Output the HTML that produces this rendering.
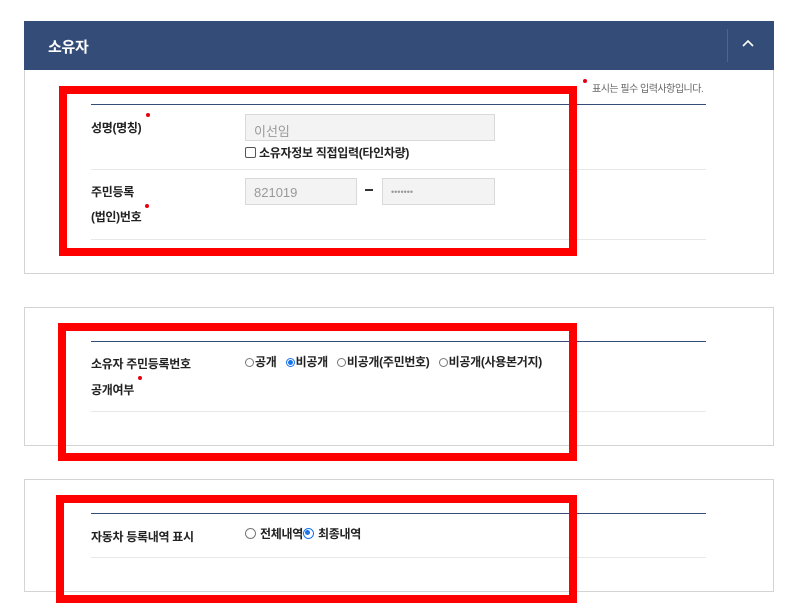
<!DOCTYPE html>
<html><head><meta charset="utf-8"><style>
*{margin:0;padding:0;box-sizing:border-box}
body{width:803px;height:613px;background:#fff;position:relative;overflow:hidden;font-family:"Liberation Sans","Noto Sans CJK KR",sans-serif;color:#222}
.a{position:absolute}
.hd{left:24px;top:21px;width:750px;height:49px;background:#344d78}
.t{font-weight:bold;font-size:12px;white-space:nowrap;letter-spacing:-0.3px}
.pn{border:1px solid #d4d4d4}
.dk{height:1px;background:#344d78;left:91px;width:615px}
.lt{height:1px;background:#e8e8e8;left:91px;width:615px}
.dot{width:4px;height:4px;border-radius:50%;background:#e60012}
.in{background:#f3f3f3;border:1px solid #d9d9d9;height:27px;font-size:13px;color:#999;padding:6px 0 0 8px}
.rb{border:8px solid #ff0000}
.r{display:inline-block;width:9px;height:9px;border:1px solid #777;border-radius:50%;vertical-align:-1px;margin-right:1px;position:relative}
.r.on{border-color:#1a73e8}
.r.on:after{content:"";position:absolute;left:1px;top:1px;width:5px;height:5px;border-radius:50%;background:#1a73e8}
</style></head><body>
<div class="a hd"></div>
<div class="a t" style="left:48px;top:36px;font-size:15px;color:#fff">소유자</div>
<div class="a" style="left:727px;top:29px;width:1px;height:33px;background:#4d6590"></div>
<svg class="a" style="left:741px;top:38px" width="14" height="10"><path d="M2 8 L7 3 L12 8" stroke="#fff" stroke-width="1.6" fill="none"/></svg>

<div class="a pn" style="left:24px;top:70px;width:750px;height:204px;border-top:none"></div>
<div class="a dot" style="left:583px;top:79px"></div>
<div class="a" style="left:592px;top:80px;font-size:10px;color:#666;letter-spacing:-0.5px">표시는 필수 입력사항입니다.</div>
<div class="a dk" style="top:104px"></div>
<div class="a t" style="left:91px;top:119px">성명(명칭)</div>
<div class="a dot" style="left:146px;top:113px"></div>
<div class="a in" style="left:245px;top:114px;width:250px">이선임</div>
<div class="a t" style="left:245px;top:144px"><span style="display:inline-block;width:11px;height:11px;border:1px solid #555;border-radius:2px;vertical-align:-1px"></span> 소유자정보 직접입력(타인차량)</div>
<div class="a lt" style="top:169px"></div>
<div class="a t" style="left:91px;top:183px">주민등록</div>
<div class="a t" style="left:91px;top:208px">(법인)번호</div>
<div class="a dot" style="left:145px;top:204px"></div>
<div class="a in" style="left:245px;top:178px;width:112px">821019</div>
<div class="a" style="left:365px;top:189px;width:8px;height:2px;background:#333"></div>
<div class="a in" style="left:382px;top:178px;width:113px;font-size:9px;padding-top:8px">•••••••</div>
<div class="a lt" style="top:239px"></div>
<div class="a rb" style="left:59px;top:86px;width:518px;height:170px"></div>

<div class="a pn" style="left:24px;top:307px;width:750px;height:139px"></div>
<div class="a dk" style="top:341px"></div>
<div class="a t" style="left:91px;top:355px">소유자 주민등록번호</div>
<div class="a t" style="left:91px;top:381px">공개여부</div>
<div class="a dot" style="left:138px;top:376px"></div>
<div class="a t" style="left:245px;top:353px"><span class="r"></span>공개 &nbsp;&nbsp;<span class="r on"></span>비공개 &nbsp;&nbsp;<span class="r"></span>비공개(주민번호) &nbsp;&nbsp;<span class="r"></span>비공개(사용본거지)</div>
<div class="a lt" style="top:411px"></div>
<div class="a rb" style="left:58px;top:323px;width:519px;height:138px"></div>

<div class="a pn" style="left:24px;top:479px;width:750px;height:113px"></div>
<div class="a dk" style="top:513px"></div>
<div class="a t" style="left:91px;top:528px">자동차 등록내역 표시</div>
<div class="a t" style="left:245px;top:525px"><span class="r" style="width:11px;height:11px"></span> 전체내역<span class="r on" style="width:11px;height:11px"></span> 최종내역</div>
<div class="a lt" style="top:557px"></div>
<div class="a rb" style="left:56px;top:495px;width:521px;height:108px"></div>
</body></html>
